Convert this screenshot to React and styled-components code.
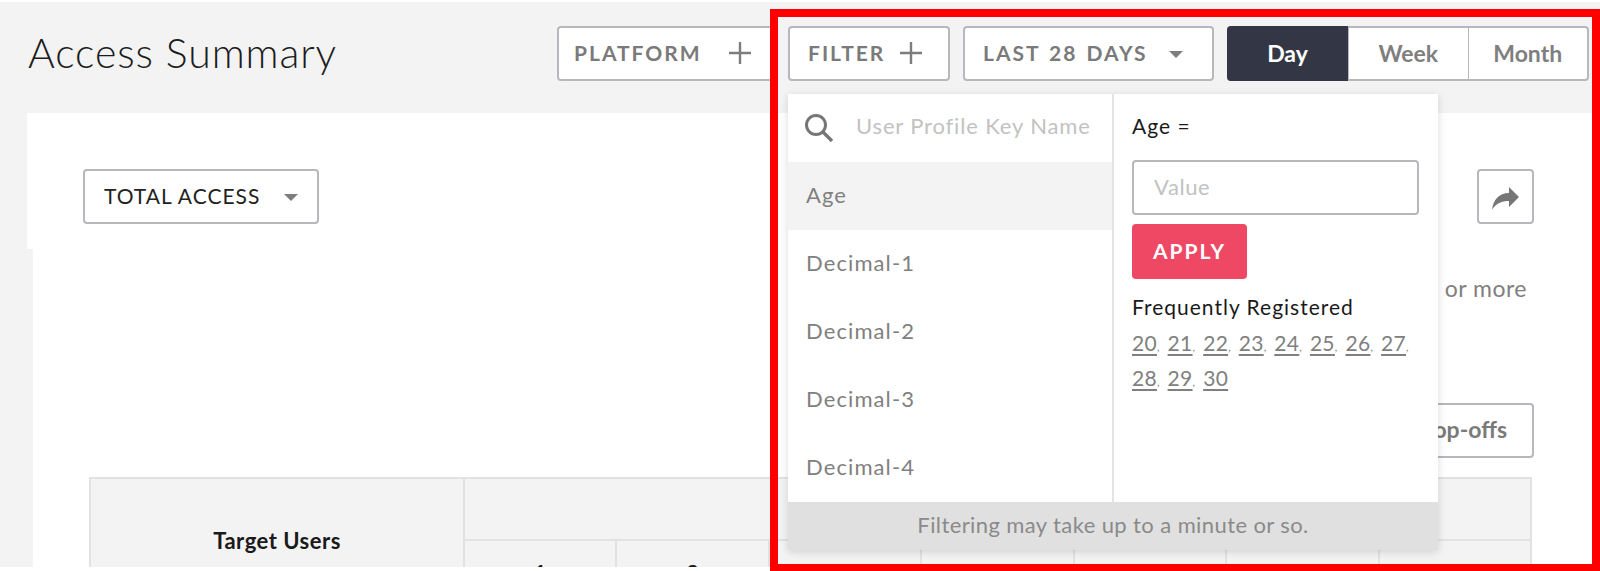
import React from 'react';
import styled, { createGlobalStyle } from 'styled-components';

const GlobalStyle = createGlobalStyle`
  html, body {
    margin: 0;
    padding: 0;
    background: #fff;
    font-family: Lato, "Open Sans", sans-serif;
  }
`;

const FILTER_KEYS = ['Age', 'Decimal-1', 'Decimal-2', 'Decimal-3', 'Decimal-4'];
const FREQUENT_VALUES = [20, 21, 22, 23, 24, 25, 26, 27, 28, 29, 30];
const DAY_COLUMNS = [1, 2, 3, 4, 5, 6, 7];

const Page = styled.div`
  position: relative;
  width: 1600px;
  height: 571px;
  padding-top: 2px;
  box-sizing: border-box;
  overflow: hidden;
`;

const Surface = styled.div`
  height: 565px;
  overflow: hidden;
  background: #f3f3f3;
`;

const Header = styled.header`
  display: flex;
  align-items: flex-start;
  justify-content: space-between;
  height: 111px;
  box-sizing: border-box;
  padding: 24px 11px 0 28px;
`;

const Title = styled.h1`
  margin: 0;
  font-size: 41px;
  font-weight: 300;
  line-height: 54px;
  color: #1c1c1c;
  letter-spacing: 0.9px;
`;

const Controls = styled.div`
  display: flex;
  gap: 13px;
`;

const ControlButton = styled.button`
  display: flex;
  align-items: center;
  justify-content: space-between;
  width: ${(p) => p.$width}px;
  height: 55px;
  box-sizing: border-box;
  padding: 0 ${(p) => p.$right}px 2px ${(p) => p.$left}px;
  background: #fff;
  border: 2px solid #b7b8bc;
  border-radius: 4px;
  font-family: inherit;
  font-size: 21px;
  font-weight: 700;
  letter-spacing: 2px;
  word-spacing: 2px;
  color: #7a7a7a;
`;

const Caret = styled.span`
  width: 0;
  height: 0;
  margin-top: 3px;
  border-left: 7.5px solid transparent;
  border-right: 7.5px solid transparent;
  border-top: 7.5px solid #7d7d7d;
`;

const Segments = styled.div`
  display: flex;
  width: 362px;
  height: 55px;
  box-sizing: border-box;
  background: #fff;
  border: 2px solid #b7b8bc;
  border-radius: 4px;
`;

const Segment = styled.div`
  flex: ${(p) => (p.$active ? '0 0 121px' : '1')};
  display: flex;
  align-items: center;
  justify-content: center;
  padding-bottom: 2px;
  margin: ${(p) => (p.$active ? '-2px 0 -2px -2px' : '0')};
  font-size: 23px;
  font-weight: 700;
  color: ${(p) => (p.$active ? '#fff' : '#7f7f7f')};
  background: ${(p) => (p.$active ? '#333745' : 'transparent')};
  border-radius: ${(p) => (p.$active ? '4px 0 0 4px' : '0')};
  & + & {
    border-left: 1px solid #b7b8bc;
  }
`;

const PanelTop = styled.section`
  display: flex;
  align-items: flex-start;
  justify-content: space-between;
  height: 136px;
  box-sizing: border-box;
  margin-left: 27px;
  padding: 56px 66px 0 56px;
  background: #fff;
`;

const MetricSelect = styled.button`
  display: flex;
  align-items: center;
  justify-content: space-between;
  width: 236px;
  height: 55px;
  box-sizing: border-box;
  padding: 0 19px 2px 19px;
  background: #fff;
  border: 2px solid #b7b8bc;
  border-radius: 4px;
  font-family: inherit;
  font-size: 21px;
  letter-spacing: 1px;
  color: #222;
`;

const ShareButton = styled.button`
  display: flex;
  align-items: center;
  justify-content: center;
  width: 57px;
  height: 55px;
  padding: 4px 0 0;
  background: #fff;
  border: 2px solid #b7b8bc;
  border-radius: 4px;
`;

const PanelBody = styled.section`
  display: flex;
  flex-direction: column;
  height: 400px;
  margin-left: 33px;
  padding-right: 66px;
  background: #fff;
`;

const Note = styled.p`
  margin: 22px 7px 0 0;
  text-align: right;
  font-size: 23px;
  line-height: 34px;
  letter-spacing: 0.5px;
  color: #7f7f7f;
`;

const DropOffsButton = styled.button`
  align-self: flex-end;
  width: 140px;
  height: 55px;
  margin-top: 98px;
  box-sizing: border-box;
  padding: 0 25px 4px 0;
  text-align: right;
  background: #fff;
  border: 2px solid #b7b8bc;
  border-radius: 4px;
  font-family: inherit;
  font-size: 23px;
  font-weight: 700;
  color: #7a7a7a;
`;

const Table = styled.div`
  display: grid;
  grid-template-columns: 372px repeat(7, 1fr);
  grid-template-rows: 62px 60px;
  width: 1443px;
  margin: 19px 0 0 56px;
  box-sizing: border-box;
  background: #f3f3f3;
  border-top: 2px solid #e2e2e2;
  border-left: 2px solid #e2e2e2;
  border-right: 2px solid #e2e2e2;
`;

const TargetCell = styled.div`
  grid-row: span 2;
  display: flex;
  align-items: center;
  justify-content: center;
  font-size: 22px;
  font-weight: 700;
  letter-spacing: 0.5px;
  color: #1a1a1a;
`;

const DaysCell = styled.div`
  grid-column: span 7;
  border-left: 2px solid #e2e2e2;
  border-bottom: 2px solid #e2e2e2;
`;

const DayCell = styled.div`
  display: flex;
  align-items: center;
  justify-content: center;
  border-left: 2px solid #e2e2e2;
  font-size: 21px;
  font-weight: 700;
  color: #1a1a1a;
`;

const Popover = styled.div`
  position: absolute;
  top: 94px;
  left: 788px;
  display: flex;
  flex-direction: column;
  width: 650px;
  background: #fff;
  box-shadow: 0 2px 8px rgba(0, 0, 0, 0.14);
`;

const PopoverColumns = styled.div`
  display: grid;
  grid-template-columns: 326px 1fr;
  height: 408px;
`;

const KeyColumn = styled.div`
  border-right: 2px solid #e4e4e4;
`;

const SearchRow = styled.div`
  display: flex;
  align-items: center;
  gap: 22px;
  height: 68px;
  box-sizing: border-box;
  padding: 0 0 0 16px;
  font-size: 22px;
  letter-spacing: 0.85px;
  color: #c2c2c2;
  & > span {
    margin-top: -5px;
  }
`;

const KeyRow = styled.div`
  display: flex;
  align-items: center;
  height: 68px;
  box-sizing: border-box;
  padding: 0 0 4px 18px;
  font-size: 22px;
  letter-spacing: 1.1px;
  color: #808080;
  background: ${(p) => (p.$selected ? '#f3f3f3' : 'transparent')};
`;

const ValueColumn = styled.div`
  padding: 17px 18px 0 18px;
`;

const FieldLabel = styled.div`
  font-size: 21px;
  line-height: 30px;
  letter-spacing: 1px;
  color: #1a1a1a;
`;

const ValueInput = styled.div`
  width: 287px;
  height: 55px;
  margin-top: 19px;
  box-sizing: border-box;
  padding-left: 20px;
  line-height: 49px;
  font-size: 22px;
  letter-spacing: 0.6px;
  color: #c2c2c2;
  border: 2px solid #b7b8bc;
  border-radius: 4px;
`;

const ApplyButton = styled.button`
  display: block;
  width: 115px;
  height: 55px;
  margin: 9px 0 13px;
  padding: 0 0 3px;
  background: #ef4864;
  border: none;
  border-radius: 4px;
  font-family: inherit;
  font-size: 21px;
  font-weight: 700;
  letter-spacing: 2px;
  color: #fff;
`;

const FrequentValues = styled.div`
  margin-top: 3px;
  font-size: 21px;
  line-height: 35px;
  letter-spacing: 0.3px;
  color: #808080;
`;

const ValueLink = styled.span`
  text-decoration: underline;
  text-decoration-thickness: 2px;
  text-underline-offset: 3px;
`;

const Comma = styled.span`
  font-size: 11px;
  line-height: 1;
  margin-right: 7.8px;
`;

const PopoverFooter = styled.div`
  display: flex;
  align-items: center;
  justify-content: center;
  height: 48px;
  padding-bottom: 4px;
  box-sizing: border-box;
  font-size: 22px;
  letter-spacing: 0.4px;
  color: #8a8a8a;
  background: #e0e0e0;
`;

const Highlight = styled.div`
  position: absolute;
  top: 9px;
  left: 770px;
  width: 830px;
  height: 562px;
  box-sizing: border-box;
  border: 8px solid #ff0000;
  border-bottom-width: 7px;
  pointer-events: none;
`;

const PlusIcon = () => (
  <svg width="22" height="22" viewBox="0 0 22 22">
    <path d="M11 0v22M0 11h22" stroke="#7d7d7d" strokeWidth="2.4" fill="none" />
  </svg>
);

const SearchIcon = () => (
  <svg width="30" height="30" viewBox="0 0 30 30">
    <circle cx="12" cy="12" r="9.5" stroke="#767676" strokeWidth="3" fill="none" />
    <path d="M19 19l9 9" stroke="#767676" strokeWidth="3.4" fill="none" />
  </svg>
);

const ShareArrow = () => (
  <svg width="27" height="23" viewBox="0 0 27 23">
    <path d="M27 10L17 0v6C7 6 1 13 0 23c4-7 10-9 17-9v6z" fill="#767676" />
  </svg>
);

export default function App() {
  return (
    <Page>
      <GlobalStyle />
      <Surface>
        <Header>
          <Title>Access Summary</Title>
          <Controls>
            <ControlButton $width={218} $left={15} $right={22}>PLATFORM <PlusIcon /></ControlButton>
            <ControlButton $width={162} $left={18} $right={26}>FILTER <PlusIcon /></ControlButton>
            <ControlButton $width={251} $left={18} $right={29}>LAST 28 DAYS <Caret /></ControlButton>
            <Segments>
              <Segment $active>Day</Segment>
              <Segment>Week</Segment>
              <Segment>Month</Segment>
            </Segments>
          </Controls>
        </Header>
        <PanelTop>
          <MetricSelect>TOTAL ACCESS <Caret /></MetricSelect>
          <ShareButton aria-label="Share"><ShareArrow /></ShareButton>
        </PanelTop>
        <PanelBody>
          <Note>or more</Note>
          <DropOffsButton>Drop-offs</DropOffsButton>
          <Table>
            <TargetCell>Target Users</TargetCell>
            <DaysCell />
            {DAY_COLUMNS.map((day) => (
              <DayCell key={day}>{day}</DayCell>
            ))}
          </Table>
        </PanelBody>
      </Surface>
      <Popover>
        <PopoverColumns>
          <KeyColumn>
            <SearchRow>
              <SearchIcon />
              <span>User Profile Key Name</span>
            </SearchRow>
            {FILTER_KEYS.map((name, i) => (
              <KeyRow key={name} $selected={i === 0}>{name}</KeyRow>
            ))}
          </KeyColumn>
          <ValueColumn>
            <FieldLabel>Age =</FieldLabel>
            <ValueInput>Value</ValueInput>
            <ApplyButton>APPLY</ApplyButton>
            <FieldLabel>Frequently Registered</FieldLabel>
            <FrequentValues>
              {FREQUENT_VALUES.map((value, i) => (
                <React.Fragment key={value}>
                  <ValueLink>{value}</ValueLink>
                  {i < FREQUENT_VALUES.length - 1 && <Comma>,</Comma>}
                  {value === 27 && <br />}
                </React.Fragment>
              ))}
            </FrequentValues>
          </ValueColumn>
        </PopoverColumns>
        <PopoverFooter>Filtering may take up to a minute or so.</PopoverFooter>
      </Popover>
      <Highlight />
    </Page>
  );
}
